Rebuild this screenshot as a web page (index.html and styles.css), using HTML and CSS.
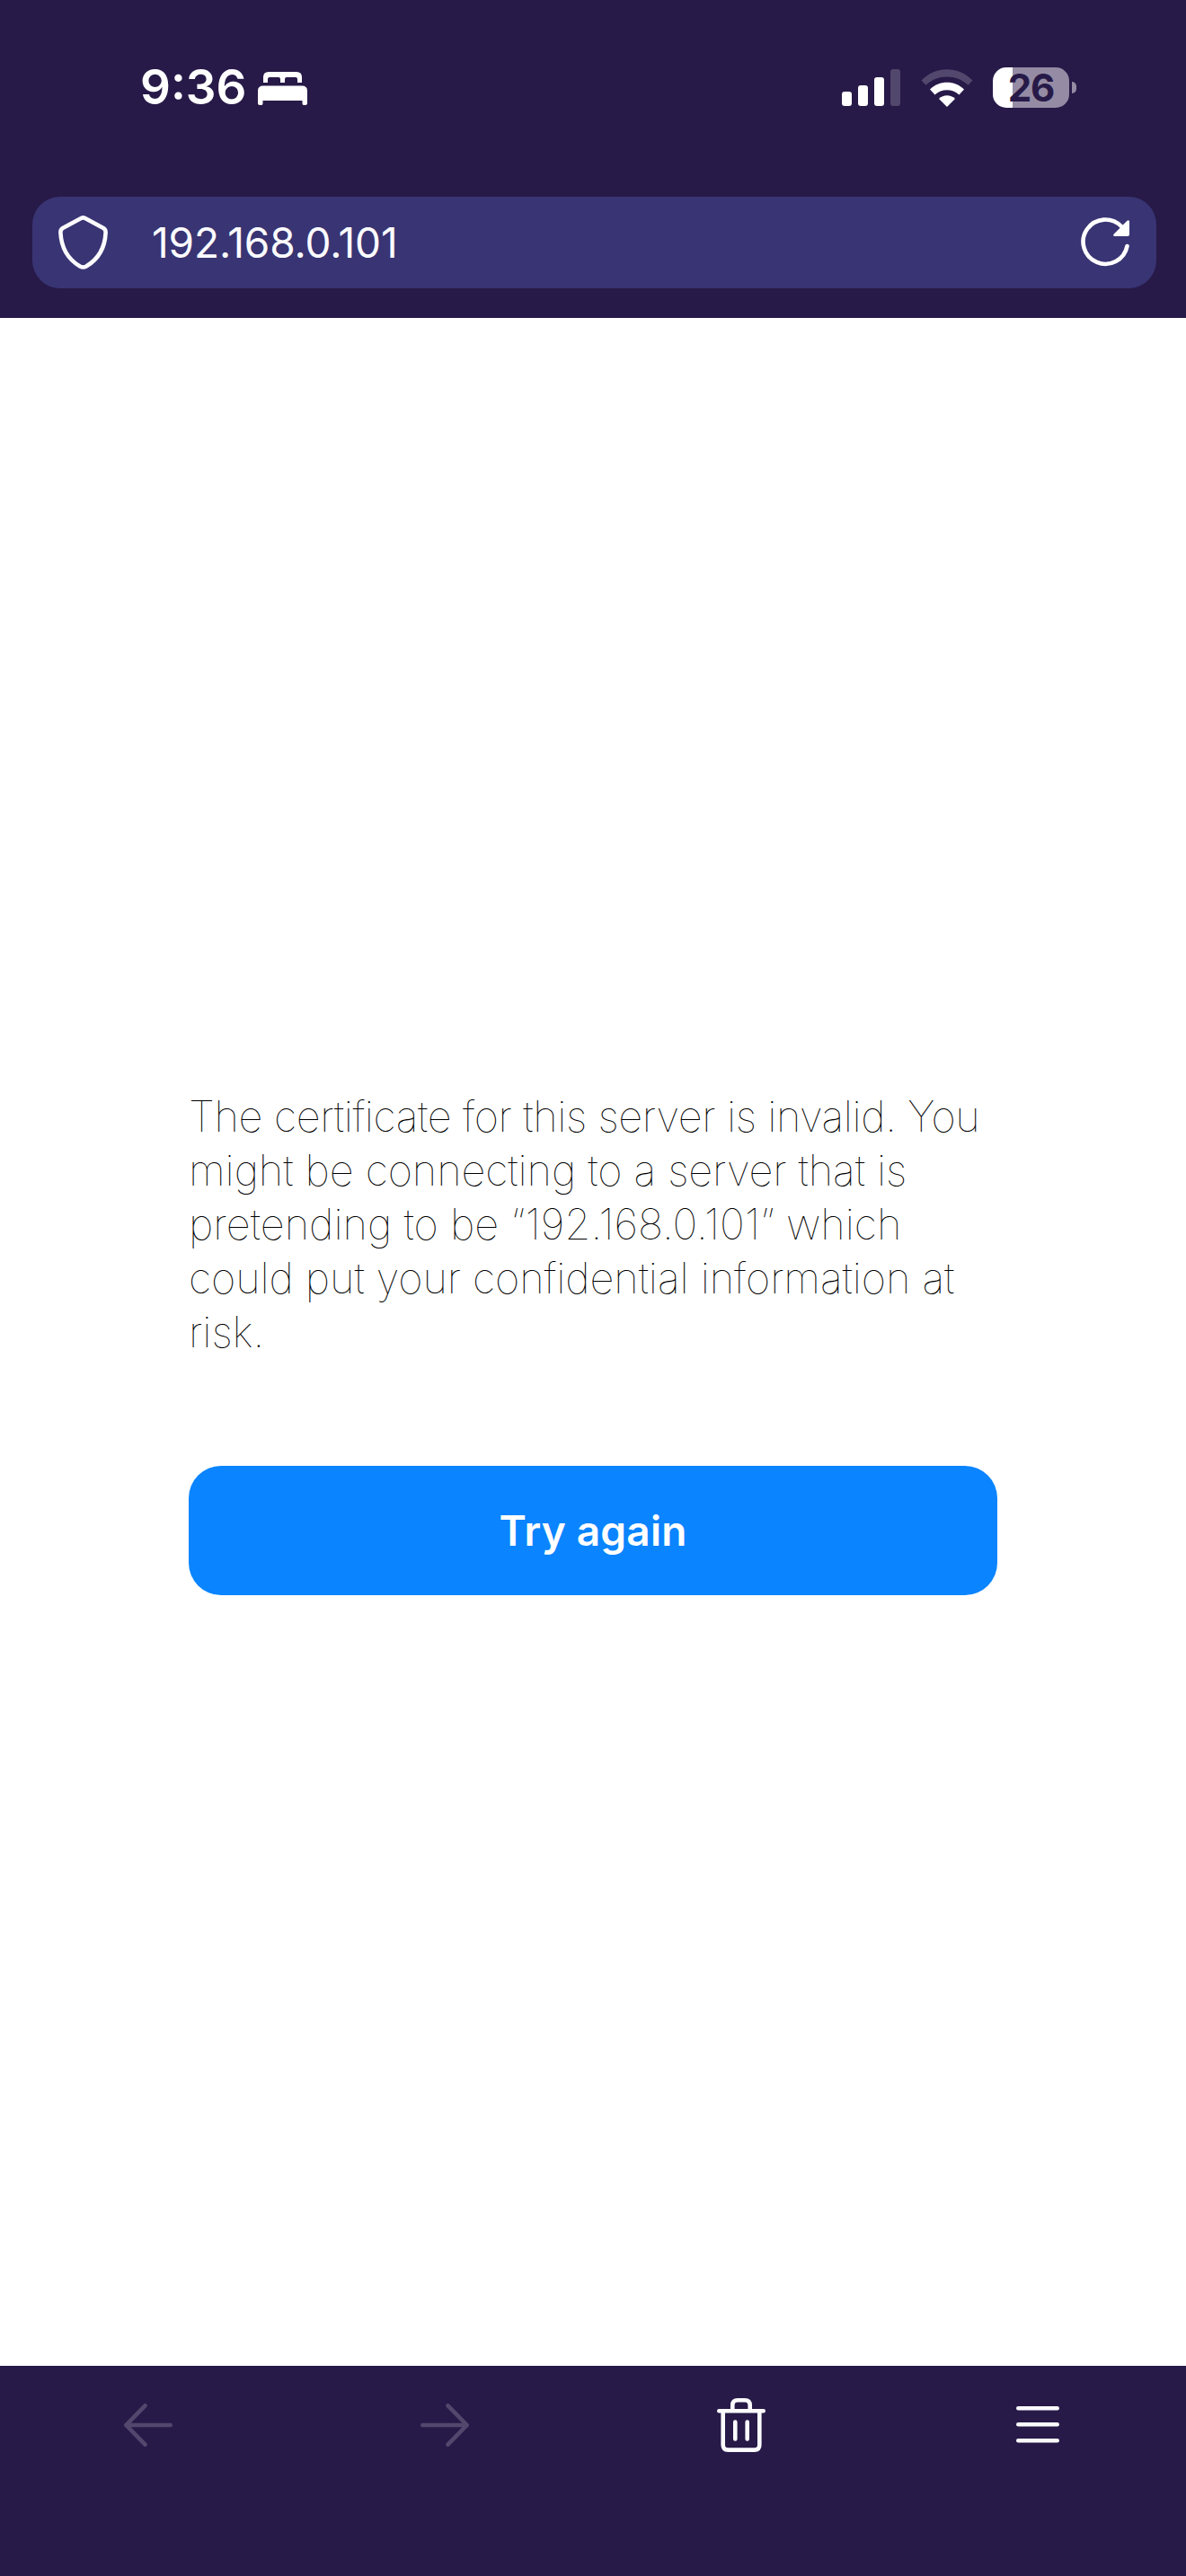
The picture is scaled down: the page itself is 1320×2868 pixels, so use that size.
FILE: index.html
```html
<!DOCTYPE html>
<html lang="en">
<head>
    <meta charset="UTF-8">
    <meta name="viewport" content="width=device-width, initial-scale=1.0">
    <title>192.168.0.101</title>
    <link rel="stylesheet" href="styles.css">
</head>
<body>
    <header class="header">
        <div class="status-bar">
            <span class="time">9:36</span>
            <svg class="bed" width="56" height="38" viewBox="0 0 56 38" fill="#fff">
                <path d="M6 12V6Q6 0 12 0H43Q49 0 49 6V12H44V8Q44 6 42 6H32Q30 6 30 8V12H25V8Q25 6 23 6H13Q11 6 11 8V12Z"/>
                <path d="M0 21Q0 15.500 6 15.500H49Q55 15.500 55 21V35Q55 37 53 37H51Q49.500 37 49.500 35V32H5.500V35Q5.500 37 4 37H2Q0 37 0 35Z"/>
            </svg>
            <div class="indicators">
                <svg class="signal" width="65" height="41" viewBox="0 0 65 41" fill="#fff">
                    <rect x="0" y="25" width="11" height="16" rx="3"/>
                    <rect x="18" y="18" width="11" height="23" rx="3"/>
                    <rect x="36" y="9" width="11" height="32" rx="3"/>
                    <rect x="54" y="0" width="11" height="41" rx="3" opacity="0.2"/>
                </svg>
                <svg class="wifi" width="58" height="42" viewBox="0 0 58 42" fill="#fff">
                    <path opacity="0.2" d="M0.500 12.500C16 -4 42 -4 57.500 12.500L52.500 17.800C39 5.500 19 5.500 5.500 17.800Z"/>
                    <path d="M10 22.500C20 12 38 12 48 22.500L42.500 28.500C35 21.500 23 21.500 15.500 28.500Z"/>
                    <path d="M20 33C25 28 33 28 38 33L29 42Z"/>
                </svg>
                <div class="battery"><span>26</span></div>
                <div class="battery-tip"></div>
            </div>
        </div>
        <div class="url-bar">
            <svg width="56" height="60" viewBox="0 0 56 60" fill="none" stroke="#fbfbfe" stroke-width="4.600" stroke-linejoin="round">
                <path d="M25.200 3Q27.500 1.700 29.800 3L50.200 14Q52.800 15.600 52.600 19C51.800 36 44.500 48.500 31 56.500Q27.500 58.400 24 56.500C10.500 48.500 3.200 36 2.400 19Q2.200 15.600 4.800 14Z"/>
            </svg>
            <span class="url">192.168.0.101</span>
            <svg width="56" height="56" viewBox="0 0 56 56" fill="none" stroke="#fff" stroke-width="4.600" stroke-linecap="round">
                <path d="M51.500 32A24.700 24.700 0 1 1 45 10"/>
                <path d="M51.500 3.800Q54 2 54 5V19Q54 21 52 21H38Q35 21 36.800 18.500Z" fill="#fff" stroke="none"/>
            </svg>
        </div>
    </header>

    <main class="content">
        <p class="message">
            <span class="l1">The certificate for this server is invalid. You</span>
            <span class="l2">might be connecting to a server that is</span>
            <span class="l3">pretending to be “192.168.0.101” which</span>
            <span class="l4">could put your confidential information at</span>
            <span class="l5">risk.</span>
        </p>
        <button class="retry">Try again</button>
    </main>

    <nav class="toolbar">
        <div class="tool disabled">
            <svg width="54" height="60" viewBox="0 0 54 60">
                <path d="M51.700 30H2.500M23.500 8.300L2.300 30L23.500 51.700"/>
            </svg>
        </div>
        <div class="tool disabled">
            <svg width="54" height="60" viewBox="0 0 54 60">
                <path d="M2.300 30H51.500M30.500 8.300L51.700 30L30.500 51.700"/>
            </svg>
        </div>
        <div class="tool">
            <svg width="54" height="60" viewBox="0 0 54 60">
                <path d="M2.300 14.300H51.700M17.300 14V8Q17.300 2.300 23 2.300H31Q36.700 2.300 36.700 8V14M6.700 15V52Q6.700 57.600 12.300 57.600H41.700Q47.300 57.600 47.300 52V15M20.300 26.500V45.500M33.700 26.500V45.500"/>
            </svg>
        </div>
        <div class="tool">
            <svg width="54" height="60" viewBox="0 0 54 60">
                <path d="M5.300 11.300H48.700M5.300 29.300H48.700M5.300 47.300H48.700"/>
            </svg>
        </div>
    </nav>
</body>
</html>
```

FILE: styles.css
```css
* { box-sizing: border-box; }
body { margin: 0; width: 1320px; height: 2868px; display: flex; flex-direction: column; background: #fff; font-family: Inter, "Liberation Sans", sans-serif; }

.header { height: 354px; background: #271a48; padding: 66px 33px 0 36px; }
.status-bar { display: flex; align-items: center; height: 63px; margin-bottom: 90px; padding: 0 89px 0 120px; color: #fff; }
.time { width: 131px; font-size: 53px; font-weight: 600; line-height: 63px; white-space: nowrap; }
.bed { margin-top: 2px; }
.indicators { display: flex; align-items: center; margin-left: auto; }
.wifi { margin-left: 23px; }
.battery { display: flex; align-items: center; justify-content: center; width: 85px; height: 45px; margin-left: 22px; border-radius: 15px; background: linear-gradient(to right, #fff 22px, #958ba4 22px); color: #271a48; font-size: 42px; font-weight: 700; letter-spacing: -1px; }
.battery-tip { width: 5px; height: 13px; margin-left: 3px; border-radius: 0 6px 6px 0; background: #958ba4; }

.url-bar { display: flex; align-items: center; height: 102px; padding: 0 28px 0 29px; border-radius: 31px; background: #393473; }
.url { flex: 1; margin-left: 48px; color: #fbfbfe; font-size: 46px; letter-spacing: -0.1px; }

.content { flex: 1; padding: 859px 210px 0; }
.message { margin: 0 0 119px; color: #000; font-size: 47px; font-weight: 100; line-height: 60px; }
.message span { display: block; white-space: nowrap; }
.message .l1 { letter-spacing: -0.4px; }
.message .l2, .message .l4 { letter-spacing: -0.1px; }
.retry { display: block; width: 100%; height: 144px; padding: 0; border: none; border-radius: 36px; background: #0a84ff; color: #fff; font-family: inherit; font-size: 46px; font-weight: 600; letter-spacing: 0.2px; }

.toolbar { display: flex; height: 234px; padding-top: 36px; background: #271a48; }
.tool { flex: 1; display: flex; justify-content: center; }
.tool svg { fill: none; stroke: #fbfbfe; stroke-width: 4.600; stroke-linecap: round; stroke-linejoin: round; }
.disabled { opacity: 0.2; }
```
